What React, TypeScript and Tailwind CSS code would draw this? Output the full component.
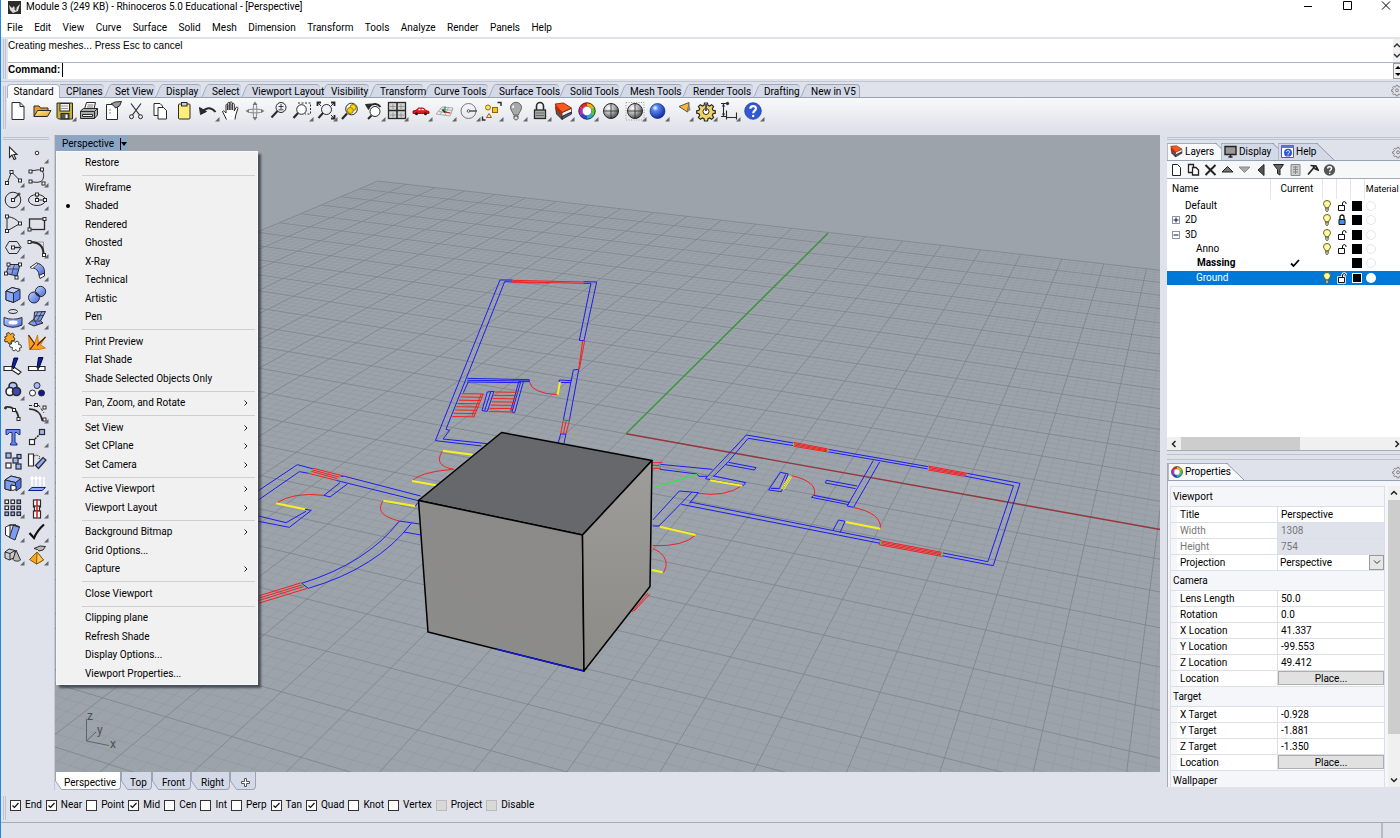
import React from "react";

type Glyph = { name: string; art: React.ReactNode; more?: boolean };

const ink = "#2a2a2a";

function Icon({ art, more }: { art: React.ReactNode; more?: boolean }) {
  return (
    <svg viewBox="0 0 24 24" className="h-6 w-6 shrink-0" fill="none" stroke={ink} strokeWidth="1" aria-hidden="true">
      {art}
      {more && <path d="M19 22.5L23.5 18V22.5Z" fill="#666" stroke="none" />}
    </svg>
  );
}

const Defs = () => (
  <svg className="absolute h-0 w-0" aria-hidden="true">
    <defs>
      <linearGradient id="gold" x1="0" y1="0" x2="1" y2="1"><stop offset="0" stopColor="#fff3a0" /><stop offset="1" stopColor="#e0a010" /></linearGradient>
      <linearGradient id="bluish" x1="0" y1="0" x2="1" y2="1"><stop offset="0" stopColor="#c3d2ff" /><stop offset="1" stopColor="#4467dc" /></linearGradient>
      <radialGradient id="grayball" cx="0.35" cy="0.3" r="0.8"><stop offset="0" stopColor="#fff" /><stop offset="0.5" stopColor="#aaa" /><stop offset="1" stopColor="#333" /></radialGradient>
      <radialGradient id="blueball" cx="0.35" cy="0.3" r="0.8"><stop offset="0" stopColor="#fff" /><stop offset="0.25" stopColor="#5a86f0" /><stop offset="1" stopColor="#021f90" /></radialGradient>
      <linearGradient id="cubeR" x1="0" y1="0" x2="0" y2="1"><stop offset="0" stopColor="#9f9d99" /><stop offset="1" stopColor="#8b8a87" /></linearGradient>
      <linearGradient id="cubeF" x1="1" y1="0" x2="0" y2="1"><stop offset="0" stopColor="#8b8a88" /><stop offset="1" stopColor="#8c8c8a" /></linearGradient>
    </defs>
  </svg>
);

const wheel = (
  <g strokeWidth="3.4" fill="none">
    <path d="M12 5.5A6.5 6.5 0 0 1 17.6 8.8" stroke="#ffb000" />
    <path d="M17.6 8.8A6.5 6.5 0 0 1 17.6 15.2" stroke="#58d020" />
    <path d="M17.6 15.2A6.5 6.5 0 0 1 12 18.5" stroke="#10b8c8" />
    <path d="M12 18.5A6.5 6.5 0 0 1 6.4 15.2" stroke="#3040e0" />
    <path d="M6.4 15.2A6.5 6.5 0 0 1 6.4 8.8" stroke="#c020c8" />
    <path d="M6.4 8.8A6.5 6.5 0 0 1 12 5.5" stroke="#f02020" />
    <circle cx="12" cy="12" r="8.2" stroke="#333" strokeWidth="1" />
    <circle cx="12" cy="12" r="4.7" stroke="#555" strokeWidth="0.7" fill="#fff" />
  </g>
);

const layersArt = (
  <g strokeWidth="0.8">
    <path d="M4.5 8L11 13.5V20.5L5.5 15Z" fill="#555" stroke="#222" />
    <path d="M11 13.5L20.5 9.5V13L11 17.5Z" fill="#f2f2f2" stroke="#444" />
    <path d="M11 17.5L20.5 13V15L11 20.5Z" fill="#556" stroke="#223" />
    <path d="M4 5L12.5 4L20.5 9L11 13.5Z" fill="#f65a20" stroke="#801800" />
    <path d="M4 5L11 13.5V17L4.5 10Z" fill="#c82400" stroke="none" />
  </g>
);

const gearPath =
  "M10.5 4h3l.5 2.3 1.6.7 2-1.3 2 2-1.3 2 .7 1.6 2.3.5v2.4l-2.3.5-.7 1.6 1.3 2-2 2-2-1.3-1.6.7-.5 2.3h-3l-.5-2.3-1.6-.7-2 1.3-2-2 1.3-2-.7-1.6-2.3-.5v-2.4l2.3-.5.7-1.6-1.3-2 2-2 2 1.3 1.6-.7z";

const topIcons: Glyph[] = [
  { name: "New", art: <path d="M6 3.5h8l4 4V20.5H6ZM14 3.5v4h4" fill="#fff" /> },
  { name: "Open", art: <><path d="M4 17.5V7h5l1.5 2H18v3" fill="#e2a21c" /><path d="M4 17.5L7.5 11.5H21L17.5 17.5Z" fill="url(#gold)" /></> },
  { name: "Save", more: true, art: <><path d="M4 4H19.5V20H5.5L4 18.5Z" fill="#c7b23c" /><rect x="7" y="4.5" width="9.5" height="7.5" fill="#f3f3f3" /><path d="M8 7h7M8 9.5h7" stroke="#999" /><rect x="8" y="14.5" width="8" height="5.5" fill="#555" /><rect x="12.5" y="15.5" width="2" height="3.5" fill="#fff" stroke="none" /></> },
  { name: "Print", art: <><path d="M7.5 10L9.5 3.5H18.5L17 10Z" fill="#fff" /><path d="M10.5 6h6M10 8h6" stroke="#777" /><path d="M3.5 12L6.5 9.5H20.5V16L17.5 19.5H3.5Z" fill="#aaa" /><path d="M3.5 12.5H17.5V19.5M17.5 12.5L20.5 9.5" /><path d="M5.5 15.5h10v2h-10z" fill="#fff" /></> },
  { name: "Document properties", art: <><path d="M5.5 5.5h11v15h-11z" fill="#fff" /><path d="M8 11h2M8 14h2" stroke="#888" /><path d="M10 5L14 3L20.5 2.5L18.5 7L14.5 9L12.5 6.5Z" fill="#999" /></> },
  { name: "Cut", art: <><path d="M7 4.5L15.5 16M17 4.5L8.5 16" strokeWidth="1.2" /><circle cx="7.5" cy="17.7" r="2" /><circle cx="16.5" cy="17.7" r="2" /></> },
  { name: "Copy", art: <><path d="M6 4.5h6l2.5 2.5v9.5H6z" fill="#fff" /><path d="M10 8.5h5.5l3 3v8.5H10z" fill="#fff" /></> },
  { name: "Paste", art: <><rect x="6.5" y="5" width="11.5" height="15" rx="1" fill="#ffee7c" /><rect x="9.5" y="3.5" width="5.5" height="3.5" fill="#ccc" /></> },
  { name: "Undo", more: true, art: <><path d="M6.5 12.5C11 7.5 16 8.5 19.5 13" strokeWidth="2" /><path d="M3.5 8.5L4.5 15.5L10.5 12.5Z" fill={ink} /></> },
  { name: "Pan", art: <path d="M7.5 20.5L3.5 12.5C4 11.3 5.5 12 7 14V6C7 5 8.8 5 8.8 6.3V11V4C9 3 10.7 3 10.9 4V11V3.5C11.2 2.5 13 2.7 13.2 3.8V11V5C13.5 4 15.2 4.3 15.3 5.5V12L17 8.5C18 7.5 19.2 8.3 18.8 9.5L16.5 17L16 20.5" fill="#fff" strokeWidth="1" /> },
  { name: "Rotate view", art: <><path d="M4 12C4 9.5 20 9.5 20 12S4 14.5 4 12" stroke="#888" /><path d="M12 4C9.5 4 9.5 20 12 20S14.5 4 12 4" stroke="#888" /><path d="M12 2.5l2.5 3.5h-5zM12 21.5l2.5-3.5h-5zM2.5 12l3.5-2v4zM21.5 12l-3.5-2v4z" fill="#777" stroke="none" /></> },
  { name: "Zoom dynamic", art: <><circle cx="14" cy="8.5" r="5" /><path d="M11.5 7.5h5M14 5v5M11.5 10.8h5" strokeWidth="0.9" /><path d="M10.5 12L4.5 18.5" strokeWidth="2" /></> },
  { name: "Zoom window", more: true, art: <><path d="M8 4H20.5V15H15" strokeDasharray="2 1.5" /><circle cx="11.5" cy="10.5" r="4.8" fill="#fff" /><path d="M8 14L3.5 19" strokeWidth="2.2" /></> },
  { name: "Zoom extents", more: true, art: <><circle cx="12.5" cy="10.5" r="5" /><path d="M9 14L4.5 19" strokeWidth="2" /><path d="M3.5 7V3.5H7M17 3.5h3.5V7M20.5 16v3.5H17" strokeWidth="1.8" /><path d="M4 4l3 3M20 4l-3 3M20 19l-3-3" /></> },
  { name: "Zoom selected", art: <><circle cx="13.5" cy="10" r="5.8" /><circle cx="15" cy="8.5" r="3" fill="#ffe000" stroke="#997a00" /><circle cx="12.3" cy="11.5" r="3" fill="#f0d000" stroke="#997a00" /><path d="M9 14.5L4 20" strokeWidth="2.2" /></> },
  { name: "Undo view change", more: true, art: <><circle cx="13" cy="12.5" r="5" fill="#fff" /><path d="M9.5 16.5L6 20" strokeWidth="2" /><path d="M7 7.5C11 3.5 16 4.5 18.5 8" strokeWidth="2" /><path d="M3.5 5.5L9.5 5L6.5 10.5Z" fill={ink} /></> },
  { name: "Four viewports", more: true, art: <g><rect x="3.5" y="3.5" width="17" height="16" fill="#d4d4d4" strokeWidth="1.3" /><path d="M12 3.5v16M3.5 11.5h17" strokeWidth="1.6" /><path d="M8 5v5M5 7.5h5.5M16 5v5M13.5 7.5h6M8 13.5v5M5 16h5.5M16 13.5v5M13.5 16h6" stroke="#888" strokeWidth="0.8" /></g> },
  { name: "Car view", more: true, art: <><path d="M4 12L7 11.3L9.5 9H14.5L17 11.5L20 12.5V14.5H4Z" fill="#dd1919" stroke="#8a0000" strokeWidth="0.8" /><path d="M10 9.8h1.5v1.5H9zM12.5 9.8h1.5l1.5 1.5h-3z" fill="#fff" stroke="none" /><circle cx="7.5" cy="14.8" r="1.5" fill="#222" stroke="none" /><circle cx="16.5" cy="14.8" r="1.5" fill="#222" stroke="none" /></> },
  { name: "Set CPlane", more: true, art: <><path d="M3 15L9 8L20 9L17 17Z M5 12.5L18.5 14M7 10L19.5 11.5M7 15.5L12 8M12 16L15.5 8.5" stroke="#aaa" /><path d="M12 13V7.5" stroke="#00a030" strokeWidth="1.2" /><path d="M12 13L17 14" stroke="#c02020" strokeWidth="1.2" /><path d="M9.5 10.5L12 13.5" strokeWidth="1.5" /></> },
  { name: "Set view", more: true, art: <><circle cx="11.5" cy="12" r="7.5" stroke="#777" /><path d="M11.5 12H20" strokeWidth="1.5" stroke="#555" /><circle cx="11.5" cy="12" r="1.3" fill="#fff" stroke="#555" /></> },
  { name: "Select", more: true, art: <><circle cx="8" cy="8.5" r="2.5" fill="#ffe060" stroke="#a07000" /><rect x="12.5" y="8.5" width="5" height="5" fill="#f6c520" stroke="#906500" /><path d="M9 14.5L11.5 18.5H6.5Z" fill="#ffe9b0" stroke="#906500" /><path d="M17.5 3.5h3.5V7M2.5 17.5V21H5.5" strokeWidth="1.4" /></> },
  { name: "Hide", more: true, art: <><path d="M9.5 16C9.5 13.5 6.5 12 6.5 8.5A5.5 5.2 0 0 1 17.5 8.5C17.5 12 14.5 13.5 14.5 16Z" fill="#a9a9a9" stroke="#666" /><path d="M9.5 6.5L8.8 9" stroke="#fff" strokeWidth="1.5" /><path d="M10 17h4v2.5l-1.5 1.5h-1l-1.5-1.5z" fill="#ddd" stroke="#444" /></> },
  { name: "Lock", more: true, art: <><path d="M8.5 11V7A3.5 3.5 0 0 1 15.5 7V11" strokeWidth="1.6" /><rect x="6.5" y="11" width="11" height="8.5" fill="#aaa" strokeWidth="1.3" /><path d="M8 14h8M8 16.5h8" stroke="#666" /></> },
  { name: "Layers", more: true, art: layersArt },
  { name: "Properties", more: true, art: wheel },
  { name: "Shade", art: <><circle cx="12" cy="12" r="7.5" fill="url(#grayball)" /><path d="M12 4.5v15M4.5 12h15" strokeWidth="0.8" /></> },
  { name: "Shade preview", more: true, art: <><path d="M3 3.5H21V21H3Z" strokeDasharray="1 1.5" stroke="#999" /><circle cx="12" cy="12" r="7.5" fill="url(#grayball)" /><path d="M12 4.5v15M4.5 12h15" strokeWidth="0.8" /></> },
  { name: "Render", more: true, art: <circle cx="11.5" cy="12" r="7.5" fill="url(#blueball)" stroke="#001860" strokeWidth="0.6" /> },
  { name: "Spotlight", more: true, art: <><path d="M9 7.5L19 3.5L17.5 13Z" fill="#ffb536" stroke="#555" /><path d="M19 3.5L20.5 11L17.5 13Z" fill="#888" stroke="none" /></> },
  { name: "Options", more: true, art: <><path d={gearPath} fill="#f1d368" strokeWidth="1.2" /><circle cx="12" cy="12.5" r="3" fill="#fff" /><path d="M12 5v7" stroke="#555" strokeWidth="2" /></> },
  { name: "Dimension", more: true, art: <><path d="M4 4.5h6M6.5 5v12M4 17.5h6M9.5 11.5v9M19.5 13.5v7M10 18.5h9.5" strokeWidth="1.1" /><circle cx="10.5" cy="4.5" r="1.2" fill={ink} /><path d="M6.5 4.5l-1.5 3h3zM6.5 17.5l-1.5-3h3z" fill={ink} stroke="none" /></> },
  { name: "Help", more: true, art: <><circle cx="12" cy="12" r="8.3" fill="#3258d2" stroke="#18328a" strokeWidth="0.7" /><path d="M9.3 9.8C9.3 6.3 15 6.3 15 9.6C15 11.8 12.2 11.6 12.2 14.3" stroke="#fff" strokeWidth="2.2" /><circle cx="12.2" cy="17" r="1.2" fill="#fff" stroke="none" /></> },
];

const dot = (x: number, y: number) => <rect x={x - 1.5} y={y - 1.5} width="3" height="3" fill="#fff" strokeWidth="1" />;
const blueSq = (x: number, y: number, s = 5) => <rect x={x} y={y} width={s} height={s} fill="#9db4fb" strokeWidth="1.2" />;
const whiteSq = (x: number, y: number, s = 5) => <rect x={x} y={y} width={s} height={s} fill="#fff" strokeWidth="1.2" />;

const sideIcons: Glyph[] = [
  { name: "Cancel", art: <path d="M8.5 6V16.5L11 14L13 18.5L14.8 17.7L12.8 13.5H16Z" fill="#fff" strokeWidth="1.1" /> },
  { name: "Point", more: true, art: <circle cx="12" cy="12" r="1.8" fill="#fff" /> },
  { name: "Polyline", more: true, art: <><path d="M6 18.5L10.5 7L19 15.5" />{dot(6, 18)}{dot(10.5, 7)}{dot(19, 15.5)}</> },
  { name: "Curve", more: true, art: <><path d="M6 6C12 5 15 4 17 6C20 9 18.5 15 16 16.5C12 18 8 17 6 16.5" />{dot(5.5, 6.5)}{dot(17, 4.5)}{dot(5.5, 16.5)}{dot(18.5, 18.5)}</> },
  { name: "Circle", more: true, art: <><circle cx="12" cy="12" r="7.8" /><path d="M12 12L18 6" strokeWidth="1.3" />{dot(12, 12)}<circle cx="18" cy="6" r="1" /></> },
  { name: "Ellipse", more: true, art: <><ellipse cx="12" cy="12" rx="8.5" ry="5.5" /><path d="M12 6v6h8" />{dot(12, 6.5)}{dot(12, 12)}{dot(20, 12)}</> },
  { name: "Arc", more: true, art: <><path d="M6 4.5C12 5 16.5 8 19 11.5L6 19Z" />{dot(6, 4.5)}{dot(19, 11.5)}{dot(6, 19)}</> },
  { name: "Rectangle", more: true, art: <><rect x="4.5" y="7" width="15" height="10.5" strokeWidth="1.3" />{dot(4.5, 17.5)}{dot(19.5, 7)}</> },
  { name: "Polygon", more: true, art: <><path d="M8 5.5H16L20 11.5L16 17.5H8L4.5 11.5Z" /><path d="M12 11.5h7" strokeWidth="1.4" />{dot(12, 11.5)}</> },
  { name: "Fillet", more: true, art: <><path d="M4.5 6H18.5V18" stroke="#999" /><path d="M4.5 6C14 6 18.5 10 18.5 18" strokeWidth="2" />{dot(4.5, 6)}{dot(19, 19)}</> },
  { name: "Surface", more: true, art: <><path d="M8 5.5H19L16 17L5 14.5Z" fill="url(#bluish)" /><path d="M13.5 5.5L10.5 16M6.5 10H17.5" strokeWidth="0.7" />{dot(7.5, 5.5)}{dot(19, 5.5)}{dot(5, 14.5)}{dot(15.5, 18.5)}</> },
  { name: "Revolve", more: true, art: <><path d="M5 8.5L11.5 4C17 5 20 9 19.5 14L14 16.5C14 12 11 8.5 5 8.5Z" fill="url(#bluish)" /><path d="M14 16.5L19.5 14V17L15 19.5Z" fill="#fff" /><path d="M5 8.5L11.5 4L13 5L7.5 9.5Z" fill="#fff" strokeWidth="0.7" /></> },
  { name: "Box", more: true, art: <><path d="M5 8L11 4.5L19 6.5V16L12.5 19.5L5 17Z" fill="#6186ef" /><path d="M5 8L12.5 10V19.5L5 17Z" fill="#8caaf8" /><path d="M5 8L11 4.5L19 6.5L12.5 10Z" fill="#c3d2ff" /></> },
  { name: "Solid union", more: true, art: <><circle cx="15.5" cy="8.5" r="5.2" fill="url(#bluish)" /><circle cx="9" cy="14.5" r="5.5" fill="url(#bluish)" /><path d="M10.5 10C12 12 14 13.5 15.5 13.5" strokeWidth="1.3" /></> },
  { name: "Project", more: true, art: <><ellipse cx="12" cy="4.5" rx="4.5" ry="2" /><path d="M3 10.5Q12 14 21 10.5V18Q12 22.5 3 18Z" fill="url(#bluish)" /><ellipse cx="12" cy="15.5" rx="5" ry="2.5" fill="#fff" stroke="#8ea6f0" /></> },
  { name: "Mesh", more: true, art: <><path d="M9.5 5L20.5 4.5L15.5 14L18 16L9 19L3.5 16.5L9 12Z" fill="url(#bluish)" /><path d="M6.5 14L15 14M9.5 9L18.5 8.5M13 5L9 12L12 18M17 4.5L12.5 13" strokeWidth="0.8" /></> },
  { name: "Join", art: <><path d="M3.5 7l2.5-1-.5-2.5 2.5-1 1.5 2 2-1.5 2 2-1.5 2 2 1.5-1 2.5-2.5-.5-.5 2.5-2.5.5-1-2-2.5.5-.5-2.5 1.5-1z" fill="#ffa51c" strokeWidth="0.9" /><path d="M10.5 12.5l2-1.5 1.5 1.5 2-1.5 2 1.5-.5 2 2.5.5.5 2.5-2 .5.5 2.5-2.5 1-1.5-2-2 1.5-2-1.5.5-2-2.5-.5-.5-2.5 2-.5z" fill="#fff" strokeWidth="0.9" /></> },
  { name: "Explode", art: <><path d="M3.5 5L9.5 13.5L12.5 5L13.5 13L20.5 7L15.5 15L20.5 18L14 19.5H4.5Z" fill="#ff9f22" stroke="#c87000" strokeWidth="0.8" /><path d="M3.5 5L9.5 13.5L5 19.5M20.5 7L12 15.5" stroke="#4a2800" strokeWidth="1.2" /></> },
  { name: "Trim", art: <><path d="M3 12.5H11V16.5H3ZM13 13L20 18L17.5 20.5L11.5 16.5" fill="#fff" strokeWidth="1.2" /><path d="M13 4H17L12.5 15L11 12Z" fill="#10209a" stroke="#000840" /></> },
  { name: "Split", art: <><path d="M3.5 12.5H20V16.5H3.5Z" fill="#fff" strokeWidth="1.2" /><path d="M13.5 3.5H18L14 14H12Z" fill="#10209a" stroke="#000840" /><path d="M13 12v5" strokeWidth="1.5" /></> },
  { name: "Group", more: true, art: <><circle cx="12" cy="8.5" r="4" fill="#b8c4ff" strokeWidth="1.6" /><circle cx="9" cy="13.5" r="4" fill="#fff" strokeWidth="1.6" /><circle cx="15.5" cy="13.5" r="4" fill="#3a48b8" strokeWidth="1.6" /></> },
  { name: "Ungroup", art: <><circle cx="12" cy="7.5" r="3" fill="#a9b8ff" /><circle cx="7.5" cy="15" r="3" fill="#fff" /><circle cx="16.5" cy="15" r="3" fill="#101890" /></> },
  { name: "Edit points", art: <><path d="M4.5 6C11 5 16 9 17.5 16" strokeWidth="1.7" /><circle cx="4.5" cy="7" r="1" fill={ink} />{dot(13, 9)}{dot(17.5, 18)}</> },
  { name: "Control points", more: true, art: <><path d="M4 4.5H14L19 12" strokeDasharray="3 1.5" /><path d="M4 8C11 8 16 12 17.5 20" strokeWidth="1.7" />{dot(11, 4)}{dot(19.5, 6.5)}{dot(19.5, 18.5)}</> },
  { name: "Text", art: <path d="M5 4.5H19V9.5H17.5L16 7.5H14V17.5L16 18.5V20H9.5V18.5L11 17.5V7.5H8.5L6.5 9.5H5Z" fill="#6888ee" stroke="#1b2a80" /> },
  { name: "Move", more: true, art: <>{whiteSq(4.5, 14.5, 5)}{blueSq(14.5, 4.5, 5)}<path d="M10 14L14.5 9.5" strokeDasharray="2 1" strokeWidth="1.5" /></> },
  { name: "Copy objects", art: <>{blueSq(5, 4)}{whiteSq(5, 14)}{blueSq(16, 5.5, 4)}{blueSq(12, 9)}{blueSq(15, 15)}</> },
  { name: "Rotate", art: <><path d="M3.5 5H8.5V17H3.5Z" fill="#fff" strokeWidth="1.2" /><path d="M10.5 16.5L18 8.5L21 11L13.5 19.5Z" fill="#8eaaf8" strokeWidth="1.2" /><path d="M9 7Q12 5 15 8L14 10" strokeDasharray="1.5 1" /></> },
  { name: "Boolean", more: true, art: <><path d="M4 8L10 4L20 6.5V15.5L15 19V14L10 13V18.5L4 17Z" fill="#4f75e4" /><path d="M4 8L10 4L20 6.5L14.5 10.5Z" fill="#a7bcff" /><path d="M4 8L14.5 10.5V14L10 13V18.5L4 17Z" fill="#7f9cf5" /><path d="M10 13L15 14V17L12 18.5L10 18Z" fill="#fff" /></> },
  { name: "Project to CPlane", more: true, art: <><path d="M3.5 18.5L7 15.5H20.5L17 18.5Z" fill="#8eaaf8" stroke="#102090" /><path d="M7 14V5M11 14V5M15 14V5M19 14V5M5.5 7L7 5L8.5 7M9.5 7L11 5L12.5 7M13.5 7L15 5L16.5 7" stroke="#fff" strokeWidth="1.5" /></> },
  { name: "Array", more: true, art: <>{[4, 10, 16].map((x) => [4, 10, 16].map((y) => <React.Fragment key={`${x}-${y}`}>{x + y > 16 ? blueSq(x, y, 3.5) : whiteSq(x, y, 3.5)}</React.Fragment>))}</> },
  { name: "Align", more: true, art: <>{whiteSq(8.5, 4, 7)}{whiteSq(9.5, 10, 5)}{whiteSq(8.5, 15, 7)}<path d="M12 3V22" stroke="#d82020" strokeWidth="1.6" /></> },
  { name: "Orient", more: true, art: <><path d="M4.5 7L9 5V17.5L4.5 15Z" fill="#fff" /><path d="M12.5 5L18.5 7L14 20L8.5 17.5Z" fill="#7f9cf5" /><path d="M12.5 5L18.5 7M8.5 5L15 5" strokeWidth="1.5" /></> },
  { name: "Check", more: true, art: <path d="M4.5 13L9 18C11.5 12 15 8 19 4.5" strokeWidth="2.2" stroke="#111" /> },
  { name: "Shapes", more: true, art: <><path d="M4 9L8 6L14 7.5V14L8.5 17L4 15Z" fill="#ccc" /><path d="M4 9L9 10.5V17M9 10.5L14 7.5" /><path d="M15 7L19.5 17C17 19 13 18 12 16.5Z" fill="#bbb" /></> },
  { name: "Pyramid", more: true, art: <><path d="M12 9L18.5 17L11.5 21L4.5 16.5Z" fill="#f7a522" stroke="#8a5a00" /><path d="M12 9L18.5 17L11.5 21Z" fill="#ffc860" stroke="#8a5a00" /><path d="M9 5.5L15 3L20.5 3.5L18 7L14 8L12.5 6.5Z" fill="#bbb" /></> },
];

function project(t: number, s: number): [number, number] {
  const a = -0.01474 * t;
  const b = 0.03427 * s;
  const w = 1 + a + b;
  return [(626 - 2850 * a + 1249 * b) / w, (433.7 - 187 * (a + b)) / w];
}

function seg(a: [number, number], b: [number, number]) {
  return `M${a[0].toFixed(1)} ${a[1].toFixed(1)}L${b[0].toFixed(1)} ${b[1].toFixed(1)}`;
}

function gridPaths() {
  let minor = "";
  let major = "";
  for (let i = -70; i <= 70; i++) {
    const k = i / 5;
    const d = seg(project(k, -14), project(k, 14)) + seg(project(-14, k), project(14, k));
    if (i % 5 === 0) major += d;
    else minor += d;
  }
  return { minor, major };
}

function stairs() {
  let d = "";
  for (let i = 0; i < 8; i++) {
    const y = 401 + i * 9.8;
    d += `M${635 - i * 4} ${y}L${700 - i * 3.7} ${y + 1}`;
  }
  for (let i = 0; i < 7; i++) {
    const y = 396 + i * 9.8;
    d += `M${734 - i * 3} ${y}L${803 - i * 2.5} ${y + 1}`;
  }
  return d;
}

function Scene() {
  const { minor, major } = gridPaths();
  const p = { vectorEffect: "non-scaling-stroke" as const, fill: "none" };
  return (
    <svg viewBox="55 135 1105 637" preserveAspectRatio="xMinYMin slice" className="block h-full w-full" role="img" aria-label="Perspective viewport">
      <rect x="0" y="0" width="3000" height="2000" fill="#9ca3ab" />
      <path d={minor} stroke="#90979f" strokeWidth="0.5" />
      <path d={major} stroke="#7e838b" strokeWidth="0.8" />
      <path d="M626 433.7L1260 547.5" stroke="#94383c" strokeWidth="1.4" />
      <path d="M626 433.7L828 233.3" stroke="#3c963c" strokeWidth="1.4" />
      <g transform="translate(250 260) scale(0.333333)" strokeWidth="1">
        <path {...p} stroke="#1c1cf4" d="M788 60L750 60L556 542L695 558M788 66L764 65L588 508L599 511L579 537L712 551M1000 65L1040 66L1002 242L988 241L1023 70L1000 70M986 328L970 330L940 480L958 482L986 330M965 362L928 360V367L963 368M932 522H948M932 522L925 548M948 522L942 550M652 355L838 359V365H805M652 361L838 363M652 366L810 368M640 398L655 366M812 366L786 456L794 458L820 366M806 366L782 454M712 396L732 394L712 454L696 452ZM722 396L704 452M25 692L142 614L190 627M25 720L148 635L176 640M272 649L284 649L512 708M258 661L505 722M270 668L222 706L240 711L292 672M165 748L184 751L118 802L25 784M168 754L108 788L25 768M495 740L503 728M448 783L508 792M448 783Q350 910 155 970L175 985Q380 925 484 790M462 816L512 825" />
        <path {...p} stroke="#f42020" d="M788 61L1000 66M788 65L1000 70M788 68L900 69M1004 242L988 328M998 242L990 300L986 328M940 480L932 522M949 481L940 522M958 482L948 522M838 365Q845 400 922 404M578 572C560 600 565 620 612 628C560 632 510 640 486 663M190 625L284 649M188 630L270 652M184 634L262 656M176 640L258 661M222 706Q130 695 78 730M400 722C380 750 395 770 448 783M155 968L25 1008M158 974L25 1015M163 979L25 1022M172 985L25 1030M700 402L672 470M694 402L666 468" />
        <path {...p} stroke="#f42020" d={stairs()} />
        <path {...p} stroke="#f6f020" strokeWidth="2" d="M930 366L923 404M578 572L668 584M486 663L558 676M78 730L165 748M400 722L495 738" />
        <path {...p} stroke="#20e040" d="M190 627L176 640M272 649L258 661M153 970L165 982M940 480H958" />
      </g>
      <g transform="translate(600 220) scale(0.357142 0.333333)" strokeWidth="1">
        <path {...p} stroke="#1c1cf4" d="M295 776L410 645L542 669M318 770L360 724L415 655L542 677M638 688L919 740M636 695L919 747M1028 760L1176 790L1101 1037L957 1007M1020 768L1158 797L1086 1025L960 999M252 846L785 960V970L228 853M765 722L692 858L710 862L783 726M700 848L598 826L592 832L696 854M720 798L634 781L631 789L716 806M360 727L437 743L432 750L352 734M318 768L408 788L402 796L295 776M315 748L168 733V748L272 762L277 769H300M148 900L222 813L275 818L250 850M148 918H165L258 816M505 757L527 762L508 815L472 810ZM520 763L502 806L478 805M652 932L668 900L686 904L672 938" />
        <path {...p} stroke="#f42020" d="M542 667L638 687M542 671L638 690M542 675L638 693M542 679L638 696M919 738L1028 760M919 742L1026 763M919 746L1024 766M919 750L1020 769M785 962L957 997M785 966L957 1001M782 970L957 1005M780 974L957 1009M148 728H175M148 736H168M148 745H168M398 797Q350 832 275 820M537 767Q610 785 600 826M708 862Q790 880 785 926M268 945Q235 980 148 977M148 985Q190 1005 185 1040L178 1057" />
        <path {...p} stroke="#f6f020" strokeWidth="2" d="M308 781L398 797M688 906L785 926M168 920L268 945M145 1050L175 1057" />
        <path {...p} stroke="#f6f020" d="M530 768L508 805M537 770L515 808M508 805L515 808M533 769L511 806" />
        <path {...p} stroke="#30e840" strokeWidth="1.3" d="M148 804L272 763M542 668V679M638 687V696M919 740V749M786 962V972M957 998V1008M168 733V744" />
      </g>
      <path d="M648 593L632 612M650 594L634 611" stroke="#f42020" />
      <g stroke="#000" strokeWidth="1.5" strokeLinejoin="round">
        <path d="M501.5 432.5L652 460.5L582.5 535L418.5 500.5Z" fill="#67686b" />
        <path d="M418.5 500.5L582.5 535L584 671L428 632Z" fill="url(#cubeF)" />
        <path d="M652 460.5L650 586.5L584 671L582.5 535Z" fill="url(#cubeR)" />
      </g>
      <path d="M496 649L583 670.7" stroke="#1515d0" strokeWidth="1.4" />
      <path d="M86.5 719V741L109 745.5M86.5 741L96 732" fill="none" stroke="#5f646b" />
      <g fill="#4b5057" fontFamily="Roboto, sans-serif" fontSize="12">
        <text x="87" y="720">z</text>
        <text x="97" y="734">y</text>
        <text x="110" y="748">x</text>
      </g>
    </svg>
  );
}

type Entry = { text: string; sub?: boolean; on?: boolean };
const menuGroups: Entry[][] = [
  [{ text: "Restore" }],
  [{ text: "Wireframe" }, { text: "Shaded", on: true }, { text: "Rendered" }, { text: "Ghosted" }, { text: "X-Ray" }, { text: "Technical" }, { text: "Artistic" }, { text: "Pen" }],
  [{ text: "Print Preview" }, { text: "Flat Shade" }, { text: "Shade Selected Objects Only" }],
  [{ text: "Pan, Zoom, and Rotate", sub: true }],
  [{ text: "Set View", sub: true }, { text: "Set CPlane", sub: true }, { text: "Set Camera", sub: true }],
  [{ text: "Active Viewport", sub: true }, { text: "Viewport Layout", sub: true }],
  [{ text: "Background Bitmap", sub: true }, { text: "Grid Options..." }, { text: "Capture", sub: true }],
  [{ text: "Close Viewport" }],
  [{ text: "Clipping plane" }, { text: "Refresh Shade" }, { text: "Display Options..." }, { text: "Viewport Properties..." }],
];

function ContextMenu() {
  return (
    <div role="menu" className="absolute top-4 left-[1px] flex h-[534px] w-[202px] flex-col border border-[#f8f8f8] bg-[#f1f1f1] pt-[2px] pb-px shadow-[3px_3px_2px_rgba(40,45,55,0.7)]">
      {menuGroups.map((group, g) => (
        <React.Fragment key={g}>
          {g > 0 && <div role="separator" className="mr-0.5 ml-[25px] flex h-1.5 shrink-0 flex-col justify-center"><div className="h-px bg-[#cfd0d2]" /></div>}
          {group.map((e) => (
            <button key={e.text} role="menuitem" className="flex min-h-0 w-full flex-1 items-center pr-2 text-left text-[10px] leading-3 text-black">
              <span className="flex w-[28px] shrink-0 justify-center pr-1.5">{e.on && <span className="h-1 w-1 rounded-full bg-black" />}</span>
              <span className="flex-1 whitespace-nowrap">{e.text}</span>
              {e.sub && <svg viewBox="0 0 6 8" className="h-2 w-1.5" fill="none" stroke="#222"><path d="M1.5 1.5L4 4L1.5 6.5" /></svg>}
            </button>
          ))}
        </React.Fragment>
      ))}
    </div>
  );
}

const toolTabs = [
  { t: "CPlanes", w: "w-[44px]" },
  { t: "Set View", w: "w-[51px]" },
  { t: "Display", w: "w-[46px]" },
  { t: "Select", w: "w-[40px]" },
  { t: "Viewport Layout", w: "w-[79px]" },
  { t: "Visibility", w: "w-[49px]" },
  { t: "Transform", w: "w-[54px]" },
  { t: "Curve Tools", w: "w-[65px]" },
  { t: "Surface Tools", w: "w-[71px]" },
  { t: "Solid Tools", w: "w-[60px]" },
  { t: "Mesh Tools", w: "w-[63px]" },
  { t: "Render Tools", w: "w-[71px]" },
  { t: "Drafting", w: "w-[47px]" },
  { t: "New in V5", w: "w-[60px]" },
];

function Gear() {
  return (
    <svg viewBox="0 0 24 24" className="h-3.5 w-3.5 shrink-0" fill="none" stroke="#777" strokeWidth="1.5" aria-hidden="true">
      <path d={gearPath} />
      <circle cx="12" cy="12.5" r="2.5" />
    </svg>
  );
}

function Header() {
  return (
    <>
      <header className="flex h-[18px] shrink-0 items-start justify-between bg-white pr-[9px] pl-[7px]">
        <div className="flex items-center">
          <svg viewBox="0 0 13 13" className="h-[13px] w-[13px]" aria-hidden="true">
            <rect width="13" height="13" fill="#2b2b2b" />
            <path d="M1 4L4 7L6 5L7 8L12 3L10 10L5 12L2 9Z" fill="#ddd" />
            <path d="M6 8L9 6L8 10Z" fill="#444" />
          </svg>
          <h1 className="pl-[5px] text-[10px] leading-[14px] whitespace-nowrap text-black">Module 3 (249 KB) - Rhinoceros 5.0 Educational - [Perspective]</h1>
        </div>
        <div className="flex gap-[29px] pt-[1px]">
          <button aria-label="Minimize" className="h-[10px] w-[10px]"><svg viewBox="0 0 10 10" stroke="#000"><path d="M1 5.5h8" /></svg></button>
          <button aria-label="Maximize" className="h-[10px] w-[10px]"><svg viewBox="0 0 10 10" fill="none" stroke="#000"><path d="M1.5.5h8v8h-8z" /></svg></button>
          <button aria-label="Close" className="h-[10px] w-[10px]"><svg viewBox="0 0 10 10" stroke="#000"><path d="M1 .5l8 8M9 .5l-8 8" /></svg></button>
        </div>
      </header>
      <nav className="flex h-[19px] w-[551px] shrink-0 items-center justify-between bg-white pl-1.5 text-[10px] leading-3 text-black">
        {["File", "Edit", "View", "Curve", "Surface", "Solid", "Mesh", "Dimension", "Transform", "Tools", "Analyze", "Render", "Panels", "Help"].map((m) => (
          <button key={m}>{m}</button>
        ))}
      </nav>
      <div className="h-0.5 shrink-0 bg-[#dfe2ea]" />
      <div className="flex shrink-0 bg-[#dfe2ea] pl-0.5">
        <div className="mr-0.5 w-[3px] border-x border-[#bcc2ce]" />
        <div className="min-w-0 flex-1 bg-white font-['Liberation_Sans',sans-serif] text-[10px] text-black">
          <div className="flex h-[23px] justify-between">
            <p className="text-[10px] leading-[13px]">Creating meshes... Press Esc to cancel</p>
            <div className="flex w-[7px] flex-col justify-between overflow-hidden bg-[#f0f0f0] py-[3px]">
              <svg viewBox="0 0 7 6" className="h-1.5 w-[7px]" fill="none" stroke="#333" strokeWidth="1.5"><path d="M1 5L4 2L7 5" /></svg>
              <svg viewBox="0 0 7 6" className="h-1.5 w-[7px]" fill="none" stroke="#333" strokeWidth="1.5"><path d="M1 1L4 4L7 1" /></svg>
            </div>
          </div>
          <div className="flex h-[17px] items-start border-t border-[#aab3c2]">
            <label htmlFor="cmd" className="leading-[14px] font-bold">Command:</label>
            <span className="ml-[2px] h-[14px] w-px bg-black" />
            <input id="cmd" className="h-3 min-w-0 flex-1 outline-none" />
            <div className="flex w-[7px] flex-col gap-1 border border-r-0 border-[#999] bg-[#f0f0f0] py-[2px]">
              <svg viewBox="0 0 6 3" className="h-[3px] w-1.5"><path d="M1 3L4 0L7 3" /></svg>
              <svg viewBox="0 0 6 3" className="h-[3px] w-1.5"><path d="M1 0L4 3L7 0" /></svg>
            </div>
          </div>
        </div>
      </div>
      <div className="h-[5px] shrink-0 bg-[#dfe2ea] pt-0.5"><div className="h-px bg-[#bfc5d1]" /></div>
      <div className="flex shrink-0 bg-[#dfe2ea] pl-0.5">
        <div className="mt-0.5 mr-px mb-px w-[3px] border-x border-[#bcc2ce]" />
        <div className="min-w-0 flex-1">
          <div className="flex h-[14px] items-stretch border-b border-[#97a1b3] text-[10px] leading-[13px] text-black">
            <button className="-mb-px h-[14px] w-[53px] rounded-t-sm border border-b-0 border-[#a9b1c0] bg-[#fbfbfc] text-center">Standard</button>
            {toolTabs.map(({ t, w }, i) => (
              <button key={t} className={`flex shrink-0 ${w}`}>
                {i > 0 && (
                  <svg viewBox="0 0 8 13" className="h-[13px] w-2 shrink-0" fill="#d4d9e8" stroke="#a0a8b8"><path d="M0 13.5C3 12 4 1 8 .5V14" /><path d="M8 1V13" stroke="#d4d9e8" strokeWidth="2" /></svg>
                )}
                <span className={`h-[13px] min-w-0 flex-1 rounded-tr-sm border-t border-[#a0a8b8] bg-[#d4d9e8] text-left whitespace-nowrap ${i === 0 ? "pl-[6px]" : "pl-[3px]"} ${i === 13 ? "border-r" : ""}`}><span className="relative z-10">{t}</span></span>
              </button>
            ))}
            <div className="flex-1" />
            <button aria-label="Toolbar options" className="-mt-px -mr-1"><Gear /></button>
          </div>
          <div className="h-8 bg-linear-to-b from-[#f8f9fa] to-[#dfe2e9]">
            <div className="-ml-px grid w-[759px] grid-cols-[repeat(32,minmax(0,1fr))]">
              {topIcons.map((g) => (
                <button key={g.name} aria-label={g.name} className="-mt-px flex h-[28px] items-center justify-center"><Icon art={g.art} more={g.more} /></button>
              ))}
            </div>
          </div>
        </div>
      </div>
    </>
  );
}

const bulb = (
  <svg viewBox="0 0 10 12" className="h-3 w-2.5" stroke="#55511a" strokeWidth="0.9" aria-label="On"><path d="M3.5 8C3.5 6.5 1.5 5.5 1.5 3.8A3.5 3.3 0 0 1 8.5 3.8C8.5 5.5 6.5 6.5 6.5 8Z" fill="#fffa9c" /><path d="M3.8 8h2.4v2.5L5.5 11.5h-1L3.8 10.5z" fill="#ccc" /></svg>
);
const openLock = (
  <svg viewBox="0 0 10 12" className="h-3 w-2.5" stroke="#111" fill="#fff" aria-label="Unlocked"><path d="M1.5 5.5h6v5h-6z" /><path d="M5.5 5.5V3A1.8 1.8 0 0 1 9 3V4" fill="none" /></svg>
);
const openLockSelected = (
  <svg viewBox="0 0 10 12" className="h-3 w-2.5" aria-label="Unlocked"><path d="M1.5 5.5h6v5h-6zM5.5 5.5V3A1.8 1.8 0 0 1 9 3V4" fill="none" stroke="#fff" strokeWidth="2.6" /><path d="M1.5 5.5h6v5h-6z" stroke="#111" fill="#fff" /><path d="M5.5 5.5V3A1.8 1.8 0 0 1 9 3V4" fill="none" stroke="#111" /></svg>
);
const closedLock = (
  <svg viewBox="0 0 10 12" className="h-3 w-2.5" stroke="#111" aria-label="Locked"><path d="M3 5.5V3A2 2 0 0 1 7 3V5.5" fill="none" strokeWidth="1.3" /><path d="M2 5.5h6v5H2z" fill="#3f8fe8" /></svg>
);

const layers = [
  { n: "Default", pad: "pl-[18px]", lamp: true, lock: openLock },
  { n: "2D", pad: "pl-[5px]", box: "plus", lamp: true, lock: closedLock },
  { n: "3D", pad: "pl-[5px]", box: "minus", lamp: true, lock: openLock },
  { n: "Anno", pad: "pl-[29px]", lamp: true, lock: openLock },
  { n: "Massing", pad: "pl-[30px]", bold: true, current: true },
  { n: "Ground", pad: "pl-[29px]", lamp: true, lock: openLockSelected, sel: true },
];

function PanelTab({ label, icon, active, width }: { label: string; icon: React.ReactNode; active?: boolean; width: string }) {
  const fill = active ? "#f8f9fb" : "#d4d9e8";
  return (
    <button className={`relative flex h-[17px] shrink-0 items-center text-[10px] leading-[13px] text-black ${width}`}>
      <svg viewBox="0 0 100 17" preserveAspectRatio="none" className="absolute inset-0 h-full w-[calc(100%-16px)]" aria-hidden="true"><path d="M.5 18V.5H100V18" fill={fill} stroke="#a4acbb" vectorEffect="non-scaling-stroke" /></svg>
      <svg viewBox="0 0 18 17" className="absolute top-0 right-0 h-[17px] w-[18px]" aria-hidden="true"><path d="M0 18V.5H1L18 17V18Z" fill={fill} /><path d="M0 .5H1L18 17" fill="none" stroke="#8d98ad" /></svg>
      <span className="relative flex items-center gap-[2px] pl-[3px]">{icon}{label}</span>
    </button>
  );
}

const miniLayer = <svg viewBox="3 3 19 19" className="h-[13px] w-[13px]" aria-hidden="true">{layersArt}</svg>;
const monitor = <svg viewBox="0 0 13 13" className="h-[13px] w-[13px]" aria-hidden="true"><path d="M1 1.5h11v8H1z" fill="#999" stroke="#222" strokeWidth="1.4" /><path d="M4.5 12h4M6.5 10v2" stroke="#222" strokeWidth="1.5" /></svg>;
const helpWin = <svg viewBox="0 0 13 13" className="h-[13px] w-[13px]" aria-hidden="true"><path d="M.5.5h12v12H.5z" fill="#fff" stroke="#4060c0" /><path d="M.5.5h12v2.5H.5z" fill="#5878d8" /><circle cx="7" cy="7.8" r="4" fill="#3058d0" /><path d="M5.5 7C5.5 5 8.5 5 8.5 7C8.5 8 7 8 7 9.5M7 10.5v1" stroke="#fff" fill="none" /></svg>;

const layerTools: [string, React.ReactNode][] = [
  ["New layer", <path d="M2.5 1.5h5l3 3v8h-8z" fill="#fff" stroke="#222" />],
  ["New sublayer", <><path d="M1.5 1.5h5v8h-5z" fill="#fff" stroke="#222" strokeWidth="1.3" /><path d="M5.5 4.5h3.5l2.5 2.5v5h-6z" fill="#fff" stroke="#222" strokeWidth="1.3" /></>],
  ["Delete", <path d="M1.5 2L11.5 12M11.5 2L1.5 12" stroke="#222" strokeWidth="2" />],
  ["Move up", <path d="M6.5 3.5L12 9H1Z" fill="#777" stroke="#222" />],
  ["Move down", <path d="M6.5 9.5L12 4H1Z" fill="#aaa" stroke="#888" />],
  ["Move out", <path d="M3 7L9 1.5V12.5Z" fill="#555" stroke="#222" />],
  ["Filter", <path d="M1.5 1.5h10L8 6.5V12L5.5 10.5V6.5Z" fill="#666" stroke="#222" />],
  ["Tools", <><path d="M2 1.5h9v11H2z" fill="#ccc" stroke="#888" /><path d="M4 4h5M4 6.5h5M4 9h5M6.5 3v8" stroke="#888" /></>],
  ["Hammer", <path d="M2 11.5L8 4.5M4.5 2.5L10 3L12 7L9.5 6L7 3.5" stroke="#222" strokeWidth="1.7" fill="none" />],
  ["Layer help", <><circle cx="6.5" cy="7" r="5.7" fill="#555" /><path d="M4.7 5.5C4.7 3.2 8.5 3.2 8.5 5.5C8.5 7 6.7 7 6.7 8.5M6.7 9.7v1.3" stroke="#fff" strokeWidth="1.4" fill="none" /></>],
];

const LayerCols = () => (
  <colgroup><col className="w-[103px]" /><col className="w-[52px]" /><col className="w-[14px]" /><col className="w-[14px]" /><col className="w-[14px]" /><col /></colgroup>
);

function Layers() {
  return (
    <section className="flex h-[314px] shrink-0 flex-col border-b border-[#a4acbb]">
      <div className="mb-[3px] h-[3px] border-y border-[#bcc2ce]" />
      <div className="flex border-b border-[#97a1b3]">
        <PanelTab label="Layers" icon={miniLayer} active width="w-[66px] -mr-[12px]" />
        <PanelTab label="Display" icon={monitor} width="w-[69px] -mr-[12px]" />
        <PanelTab label="Help" icon={helpWin} width="w-[56px]" />
        <div className="flex-1" />
        <button aria-label="Panel options" className="-mr-[5px]"><Gear /></button>
      </div>
      <div className="flex h-[18px] items-center gap-1 border-b border-[#a4acbb] bg-[#f6f7f9] pl-[3px]">
        {layerTools.map(([n, art]) => (
          <button key={n} aria-label={n}><svg viewBox="0 0 13 14" className="h-3.5 w-[13px]" aria-hidden="true">{art}</svg></button>
        ))}
      </div>
      <div className="flex min-h-0 flex-1 flex-col bg-white">
        <table className="w-full table-fixed border-collapse text-[10px] leading-3 text-black">
          <LayerCols />
          <thead>
            <tr className="h-5 text-left">
              <th className="border-r border-[#e3e5ea] p-0 pl-[5px] font-normal">Name</th>
              <th className="border-r border-[#e3e5ea] p-0 pl-[10px] font-normal">Current</th>
              <th className="border-r border-[#e3e5ea] p-0" /><th className="border-r border-[#e3e5ea] p-0" /><th className="border-r border-[#e3e5ea] p-0" />
              <th className="p-0 text-center text-[9px] font-normal">Material</th>
            </tr>
          </thead>
        </table>
        <table className="h-[86px] w-full table-fixed border-collapse text-[10px] leading-3 text-black">
          <LayerCols />
          <tbody>
            {layers.map((l) => (
              <tr key={l.n} className={l.sel ? "bg-[#0078d7] text-white" : ""}>
                <td className={`p-0 ${l.pad}`}>
                  <div className="flex items-center gap-[5px]">
                    {l.box && <span className="flex h-2 w-2 items-center justify-center border border-[#8a97a8] bg-white"><svg viewBox="0 0 6 6" className="h-1.5 w-1.5" stroke="#113"><path d={l.box === "plus" ? "M.5 3h5M3 .5v5" : "M.5 3h5"} /></svg></span>}
                    <span className={l.bold ? "font-bold" : ""}>{l.n}</span>
                  </div>
                </td>
                <td className="p-0">{l.current && <svg viewBox="0 0 10 9" className="ml-[20px] h-[9px] w-2.5" fill="none" stroke="#000" strokeWidth="1.8"><path d="M1 4.5L3.5 7L9 1" /></svg>}</td>
                <td className="p-0">{l.lamp && bulb}</td>
                <td className="p-0 pl-px">{l.lock}</td>
                <td className="p-0"><div className={`ml-[2px] h-2.5 w-2.5 bg-black ${l.sel ? "border border-white" : ""}`} /></td>
                <td className="p-0"><div className={`ml-[2px] h-2.5 w-2.5 rounded-full ${l.sel ? "bg-white" : "border border-[#e6e6e6] bg-white"}`} /></td>
              </tr>
            ))}
          </tbody>
        </table>
        <div className="flex-1" />
        <div className="flex h-[13px] items-center justify-between bg-[#f0f0f0] pl-1">
          <svg viewBox="0 0 6 8" className="h-2 w-1.5" fill="none" stroke="#222" strokeWidth="1.5"><path d="M4.5 1L1.5 4L4.5 7" /></svg>
          <div className="ml-1 h-full w-[119px] bg-[#cdcdcd]" />
          <div className="flex-1" />
          <svg viewBox="0 0 6 8" className="h-2 w-1.5" fill="none" stroke="#222" strokeWidth="1.5"><path d="M1.5 1L4.5 4L1.5 7" /></svg>
        </div>
      </div>
    </section>
  );
}

type Prop = { k: string; v: string; kind?: "off" | "select" | "button" };
const sections: { title: string; rows: Prop[] }[] = [
  { title: "Viewport", rows: [{ k: "Title", v: "Perspective" }, { k: "Width", v: "1308", kind: "off" }, { k: "Height", v: "754", kind: "off" }, { k: "Projection", v: "Perspective", kind: "select" }] },
  { title: "Camera", rows: [{ k: "Lens Length", v: "50.0" }, { k: "Rotation", v: "0.0" }, { k: "X Location", v: "41.337" }, { k: "Y Location", v: "-99.553" }, { k: "Z Location", v: "49.412" }, { k: "Location", v: "Place...", kind: "button" }] },
  { title: "Target", rows: [{ k: "X Target", v: "-0.928" }, { k: "Y Target", v: "-1.881" }, { k: "Z Target", v: "-1.350" }, { k: "Location", v: "Place...", kind: "button" }] },
  { title: "Wallpaper", rows: [] },
];

function PropRow({ section, row }: { section: string; row: Prop }) {
  const id = `${section}-${row.k}`.replace(/ /g, "-");
  const off = row.kind === "off";
  return (
    <div className="flex h-4 border-t border-[#dcdfe8] bg-white">
      <div className="w-1.5 shrink-0 bg-[#f5f6f9]" />
      <label htmlFor={id} className={`w-[101px] shrink-0 border-r border-[#dcdfe8] pl-[3px] leading-[16px] ${off ? "text-[#777]" : ""}`}>{row.k}</label>
      {row.kind === "button" ? (
        <button id={id} className="h-[14px] flex-1 border border-[#adadad] bg-[#e1e1e1] text-center leading-[13px]">{row.v}</button>
      ) : row.kind === "select" ? (
        <div className="relative flex min-w-0 flex-1">
          <select id={id} className="w-full appearance-none bg-white pl-[2px] leading-[16px] outline-none"><option>{row.v}</option></select>
          <span className="pointer-events-none absolute inset-y-0 right-0 flex w-[15px] items-center justify-center border border-[#999] bg-[#e6e6e6]"><svg viewBox="0 0 8 5" className="h-[5px] w-2" fill="none" stroke="#333"><path d="M1 .5L4 3.5L7 .5" /></svg></span>
        </div>
      ) : (
        <input id={id} defaultValue={row.v} disabled={off} className={`min-w-0 flex-1 pl-[3px] leading-[16px] outline-none ${off ? "bg-[#dfe2ea] text-[#777]" : "bg-white"}`} />
      )}
    </div>
  );
}

function Properties() {
  return (
    <section className="flex min-h-0 flex-1 flex-col border-l border-[#a4acbb]">
      <div className="flex border-b border-[#97a1b3]">
        <PanelTab label="Properties" active width="w-[76px]" icon={<svg viewBox="3 3 18 18" className="h-3 w-3" aria-hidden="true">{wheel}</svg>} />
        <div className="flex-1" />
        <button aria-label="Properties options" className="-mr-[5px]"><Gear /></button>
      </div>
      <div className="flex min-h-0 flex-1 gap-[3px] overflow-hidden bg-[#f5f6f9] pt-[5px] pl-[2px] text-[10px] text-black">
        <div className="min-w-0 flex-1 overflow-hidden border-x border-[#dcdfe8]">
          {sections.map((s) => (
            <div key={s.title}>
              <h2 className="h-5 border-t border-[#dcdfe8] pl-[2px] leading-5">{s.title}</h2>
              {s.rows.map((r) => <PropRow key={r.k} section={s.title} row={r} />)}
            </div>
          ))}
        </div>
        <div className="flex w-3 flex-col items-center bg-[#f0f0f0]">
          <svg viewBox="0 0 8 6" className="my-1 h-1.5 w-2 shrink-0" fill="none" stroke="#222" strokeWidth="1.5"><path d="M1 4.5L4 1.5L7 4.5" /></svg>
          <div className="h-[234px] w-full bg-[#cdcdcd]" />
          <div className="flex-1" />
          <svg viewBox="0 0 8 6" className="mb-1 h-1.5 w-2 shrink-0" fill="none" stroke="#222" strokeWidth="1.5"><path d="M1 1.5L4 4.5L7 1.5" /></svg>
        </div>
      </div>
    </section>
  );
}

function ViewTab({ children, active, width }: { children: React.ReactNode; active?: boolean; width: string }) {
  return (
    <button className={`relative flex h-[18px] items-center justify-center pt-[3px] pl-[4px] text-[10px] leading-3 ${width}`}>
      <svg viewBox="0 0 9 18" className="absolute top-0 left-0 h-[18px] w-[9px]" aria-hidden="true"><path d="M.5 0V9L6.5 17.5H9V0Z" fill={active ? "#fff" : "#d4d9e8"} /><path d="M.5 0V9L6.5 17.5H9" fill="none" stroke="#9aa4b8" /></svg>
      <span className={`absolute inset-y-0 right-0 left-2 rounded-br-sm border-r border-b border-[#9aa4b8] ${active ? "bg-white" : "bg-[#d4d9e8]"}`} />
      <span className="relative flex">{children}</span>
    </button>
  );
}

const snaps = [["End", 1], ["Near", 1], ["Point", 0], ["Mid", 1], ["Cen", 0], ["Int", 0], ["Perp", 0], ["Tan", 1], ["Quad", 1], ["Knot", 0], ["Vertex", 0], ["Project", 2], ["Disable", 2]] as const;

export default function App() {
  return (
    <div className="flex h-screen flex-col overflow-hidden border-l border-[#1f87de] bg-[#dfe2ea] font-['Roboto',sans-serif]">
      <Defs />
      <div className="flex shrink-0 flex-col bg-white"><Header /></div>
      <div className="flex min-h-0 flex-1 pt-[5px]">
        <aside className="w-[54px] shrink-0 border-r border-[#c4c8d2] pr-[5px]">
          <div className="mt-[2px] ml-0.5 h-[3px] w-[46px] border-y border-[#bcc2ce]" />
          <div className="mt-px grid h-[426px] grid-cols-2 grid-rows-[repeat(18,minmax(0,1fr))]">
            {sideIcons.map((g) => (
              <button key={g.name} aria-label={g.name} className="flex min-h-0 items-center justify-center"><Icon art={g.art} more={g.more} /></button>
            ))}
          </div>
        </aside>
        <main className="flex min-w-0 flex-1 flex-col">
          <div className="relative min-h-0 flex-1">
            <div className="absolute inset-0 overflow-hidden"><Scene /></div>
            <button className="absolute top-px left-px flex h-[15px] w-[72px] items-center bg-[#8ba5c4] pl-1.5 text-[10px] leading-3 text-black">
              Perspective
              <span className="ml-auto h-3 w-px bg-black" />
              <svg viewBox="0 0 6 4" className="mr-px h-1 w-1.5 shrink-0"><path d="M0 0h6L3 4Z" /></svg>
            </button>
            <ContextMenu />
          </div>
          <div className="flex h-[18px] shrink-0 text-black">
            <ViewTab active width="w-[66px]">Perspective</ViewTab>
            <ViewTab width="w-[31px]">Top</ViewTab>
            <ViewTab width="w-[39px]">Front</ViewTab>
            <ViewTab width="w-[39px]">Right</ViewTab>
            <ViewTab width="w-[26px]"><svg viewBox="0 0 9 9" className="h-[9px] w-[9px]" fill="#fff" stroke="#555" aria-label="Add viewport"><path d="M3.5.5h2v3h3v2h-3v3h-2v-3h-3v-2h3z" /></svg></ViewTab>
          </div>
        </main>
        <aside className="ml-[7px] flex w-[233px] shrink-0 flex-col overflow-hidden pt-[2px] pb-[3px]">
          <Layers />
          <div className="my-[3px] h-1.5 shrink-0 border-y border-[#bcc2ce]" />
          <Properties />
        </aside>
      </div>
      <footer className="shrink-0">
        <div className="flex h-[33px] items-start border-b border-[#a4acbb] pl-0.5">
          <div className="mt-1.5 mr-1 h-6 w-[3px] border-x border-[#bcc2ce]" />
          <div className="flex gap-1 pt-[9px] text-[10px] leading-3 text-black">
            {snaps.map(([n, s]) => (
              <label key={n} className="flex items-center gap-1">
                <span className="relative flex h-[11px] w-[11px]">
                  <input type="checkbox" defaultChecked={s === 1} disabled={s === 2} className="peer h-[11px] w-[11px] appearance-none border border-[#333] bg-white disabled:border-[#bbb] disabled:bg-[#d8d8d8]" />
                  <svg viewBox="0 0 11 11" className="pointer-events-none absolute inset-0 hidden h-[11px] w-[11px] peer-checked:block" fill="none" stroke="#111" strokeWidth="1.2"><path d="M2.5 5.5L4.5 7.5L8.5 3" /></svg>
                </span>
                {n}
              </label>
            ))}
          </div>
        </div>
        <div className="flex h-[15px] justify-end"><div className="mr-[17px] w-0.5 bg-[#b4bac6]" /></div>
      </footer>
    </div>
  );
}
